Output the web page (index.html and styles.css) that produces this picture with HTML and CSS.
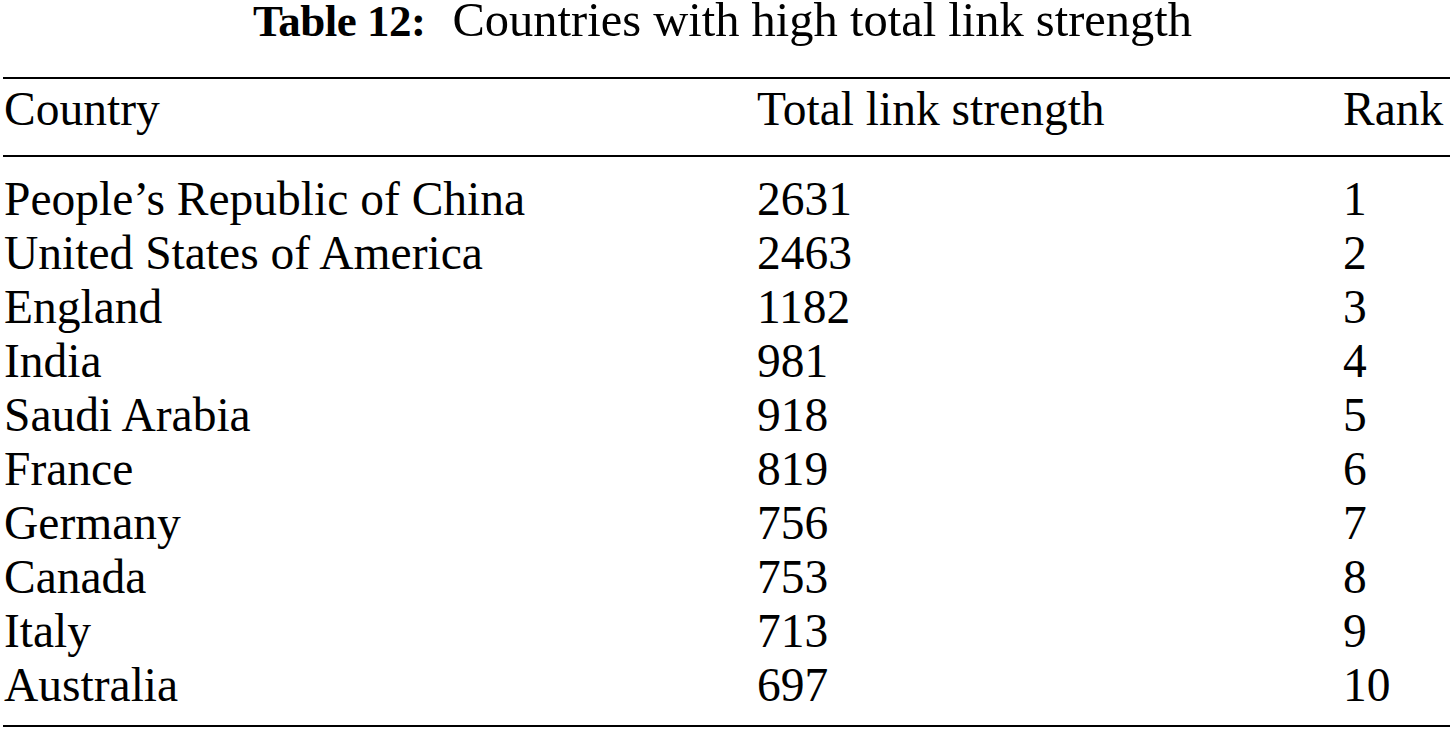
FILE: index.html
```html
<!DOCTYPE html>
<html lang="en">
<head>
    <meta charset="UTF-8">
    <meta name="viewport" content="width=device-width, initial-scale=1.0">
    <title>Table 12</title>
    <link rel="stylesheet" href="styles.css">
</head>
<body>
    <!-- Caption above the table -->
    <div class="caption"><span class="caption-label">Table 12:</span>Countries with high total link strength</div>

    <table class="data-table">
        <thead>
            <tr>
                <th class="col-country">Country</th>
                <th class="col-total">Total link strength</th>
                <th class="col-rank">Rank</th>
            </tr>
        </thead>
        <tbody>
            <tr class="first-row"><td>People’s Republic of China</td><td>2631</td><td>1</td></tr>
            <tr><td>United States of America</td><td>2463</td><td>2</td></tr>
            <tr><td>England</td><td>1182</td><td>3</td></tr>
            <tr><td>India</td><td>981</td><td>4</td></tr>
            <tr><td>Saudi Arabia</td><td>918</td><td>5</td></tr>
            <tr><td>France</td><td>819</td><td>6</td></tr>
            <tr><td>Germany</td><td>756</td><td>7</td></tr>
            <tr><td>Canada</td><td>753</td><td>8</td></tr>
            <tr><td>Italy</td><td>713</td><td>9</td></tr>
            <tr class="last-row"><td>Australia</td><td>697</td><td>10</td></tr>
        </tbody>
    </table>
</body>
</html>
```

FILE: styles.css
```css
/* Plain paper-style table, Times-like serif */
body {
    font-family: "Liberation Serif", "Times New Roman", serif;
    background-color: #fff;
    color: #000;
    margin: 0;
    padding: 0;
}
.caption {
    text-align: center;
    font-size: 48.5px;
    line-height: 40px;
    height: 77px;
    padding-right: 8px;
}
.caption-label {
    font-weight: bold;
    font-size: 45px;
    margin-right: 27px;
    letter-spacing: -0.5px;
}
.data-table {
    margin-left: 3px;
    width: 1447px;
    border-collapse: collapse;
    font-size: 47.5px;
    line-height: 54px;
    border-top: 2px solid #000;
    border-bottom: 2px solid #000;
}
.data-table th,
.data-table td {
    text-align: left;
    font-weight: normal;
    padding: 0 0 0 1px;
    white-space: nowrap;
    vertical-align: top;
}
.data-table th {
    padding-top: 3px;
    padding-bottom: 19px;
    border-bottom: 2px solid #000;
}
.col-country {
    width: 752px;
}
.col-total {
    width: 585px;
}
.first-row td {
    padding-top: 15px;
}
.last-row td {
    padding-bottom: 13px;
}
```
